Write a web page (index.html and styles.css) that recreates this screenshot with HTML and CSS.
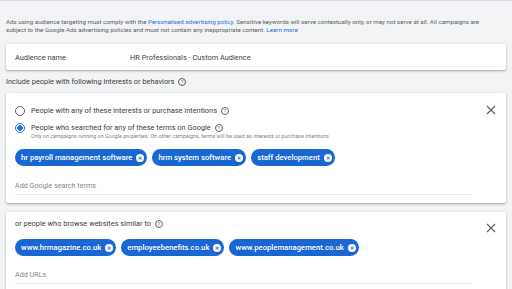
FILE: index.html
```html
<!DOCTYPE html>
<html>
<head>
  <meta charset="UTF-8">
  <title>Custom Audience</title>
  <link rel="stylesheet" href="styles.css">
</head>
<body>
  <div class="page">
    <p class="notice">
      Ads using audience targeting must comply with the <a href="#">Personalised advertising policy</a>. Sensitive keywords will serve contextually only, or may not serve at all. All campaigns are<br>
      subject to the Google Ads advertising policies and must not contain any inappropriate content. <a href="#">Learn more</a>
    </p>

    <div class="card name-card">
      <div class="name-label">Audience name</div>
      <div class="name-value">HR Professionals - Custom Audience</div>
    </div>

    <div class="section-title">Include people with following interests or behaviors <span class="help">?</span></div>

    <div class="card block">
      <div class="block-main search-block">
        <label class="radio-row">
          <span class="radio"></span>
          <span class="radio-text">People with any of these interests or purchase intentions <span class="help">?</span></span>
        </label>
        <label class="radio-row">
          <span class="radio checked"></span>
          <span class="radio-text">People who searched for any of these terms on Google <span class="help">?</span>
            <span class="hint">Only on campaigns running on Google properties. On other campaigns, terms will be used as interests or purchase intentions.</span>
          </span>
        </label>
        <div class="chips">
          <span class="chip">hr payroll management software <span class="chip-x">&#x2715;</span></span>
          <span class="chip">hrm system software <span class="chip-x">&#x2715;</span></span>
          <span class="chip">staff development <span class="chip-x">&#x2715;</span></span>
        </div>
        <div class="input">Add Google search terms</div>
      </div>
      <button class="close" aria-label="Remove">
        <svg width="10" height="10" viewBox="0 0 10 10"><path d="M1 1L9 9M9 1L1 9" stroke="#5f6368" stroke-width="1.2"/></svg>
      </button>
    </div>

    <div class="card block">
      <div class="block-main url-block">
        <div class="block-title">or people who browse websites similar to <span class="help">?</span></div>
        <div class="chips">
          <span class="chip">www.hrmagazine.co.uk <span class="chip-x">&#x2715;</span></span>
          <span class="chip">employeebenefits.co.uk <span class="chip-x">&#x2715;</span></span>
          <span class="chip">www.peoplemanagement.co.uk <span class="chip-x">&#x2715;</span></span>
        </div>
        <div class="input">Add URLs</div>
      </div>
      <button class="close url-close" aria-label="Remove">
        <svg width="10" height="10" viewBox="0 0 10 10"><path d="M1 1L9 9M9 1L1 9" stroke="#5f6368" stroke-width="1.2"/></svg>
      </button>
    </div>
  </div>
</body>
</html>
```

FILE: styles.css
```css
html, body {
  margin: 0;
  padding: 0;
  background-color: #f1f3f4;
  font-family: Roboto, "Liberation Sans", sans-serif;
  color: #3c4043;
  overflow: hidden;
}
.page {
  border-top: 1px solid #dadce0;
  padding: 0 6px;
}
.notice {
  margin: 17px 0 0;
  font-size: 6.2px;
  line-height: 8px;
  color: #5f6368;
  white-space: nowrap;
}
.notice a {
  color: #1a73e8;
  text-decoration: none;
}
.card {
  background-color: white;
  border-radius: 2px;
  box-shadow: 0 1px 2px rgba(60, 64, 67, 0.3), 0 1px 3px rgba(60, 64, 67, 0.15);
}
.name-card {
  margin-top: 10px;
  height: 26px;
  display: flex;
  align-items: center;
  font-size: 7.4px;
  color: #3c4043;
}
.name-label {
  width: 115px;
  padding-left: 9px;
}
.name-value {
  flex: 1;
  margin-right: 8px;
  padding: 5px 0 4px;
  border-bottom: 1px solid #f1f3f4;
  margin-top: 1px;
}
.section-title {
  margin: 7px 0 6px;
  font-size: 7.4px;
  line-height: 10px;
  color: #3c4043;
}
.help {
  display: inline-block;
  width: 6px;
  height: 6px;
  border: 0.8px solid #5f6368;
  border-radius: 50%;
  font-size: 5px;
  line-height: 6px;
  text-align: center;
  vertical-align: 0;
  color: #5f6368;
  margin-left: 2px;
}
.block {
  display: flex;
  padding-left: 9px;
  margin-bottom: 9px;
}
.block-main {
  flex: 1;
}
.search-block {
  padding-top: 13px;
}
.url-block {
  padding-top: 7px;
}
.radio-row {
  display: flex;
  align-items: flex-start;
  gap: 6px;
  font-size: 7.4px;
  line-height: 10px;
  margin-bottom: 7px;
}
.radio-row + .radio-row {
  margin-bottom: 10px;
}
.radio {
  box-sizing: border-box;
  width: 10px;
  height: 10px;
  border: 1.3px solid #5f6368;
  border-radius: 50%;
  flex: none;
}
.radio.checked {
  border-color: #1a73e8;
  background: radial-gradient(circle, #1a73e8 0 2.6px, white 3px);
}
.radio-text {
  display: block;
}
.hint {
  display: block;
  font-size: 5.4px;
  line-height: 6px;
  color: #80868b;
}
.chips {
  display: flex;
  gap: 5px;
}
.chip {
  display: inline-flex;
  align-items: center;
  height: 17px;
  padding: 0 3px 0 6px;
  border-radius: 9px;
  background-color: #1967d2;
  color: white;
  font-size: 7.7px;
  font-weight: 500;
}
.chip-x {
  display: inline-block;
  width: 8px;
  height: 8px;
  margin-left: 4px;
  border-radius: 50%;
  background-color: white;
  color: #1967d2;
  font-size: 5px;
  line-height: 8px;
  text-align: center;
  font-weight: 700;
}
.input {
  margin-top: 15px;
  padding-bottom: 4px;
  border-bottom: 1px solid #e8eaed;
  font-size: 7.2px;
  line-height: 9px;
  color: #80868b;
  margin-bottom: 8px;
}
.url-block .input {
  margin-top: 14px;
}
.block-title {
  font-size: 7.4px;
  line-height: 10px;
  margin-bottom: 10px;
}
.close {
  align-self: flex-start;
  border: none;
  background: none;
  padding: 0;
  margin: 10px 10px 0 14px;
  width: 10px;
  height: 10px;
  cursor: pointer;
}
.url-close {
  margin-top: 9px;
}
```
